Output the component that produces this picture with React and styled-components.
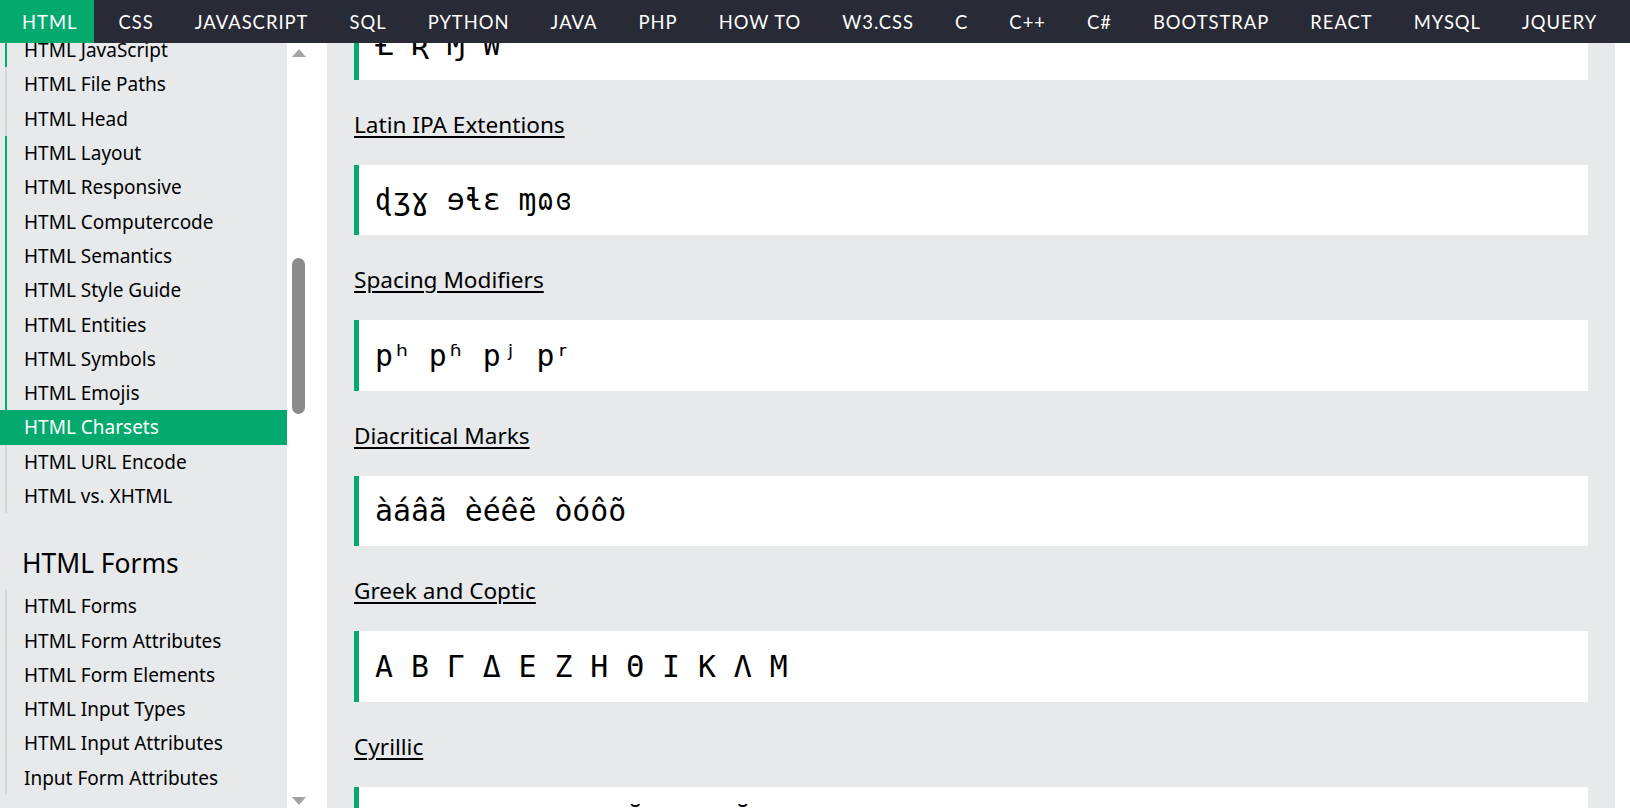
import React from 'react';
import styled, { createGlobalStyle } from 'styled-components';

const GlobalStyle = createGlobalStyle`
  html, body {
    margin: 0;
    padding: 0;
    background: #fff;
    overflow: hidden;
  }
`;

const navLinks = ['HTML', 'CSS', 'JAVASCRIPT', 'SQL', 'PYTHON', 'JAVA', 'PHP', 'HOW TO', 'W3.CSS', 'C', 'C++', 'C#', 'BOOTSTRAP', 'REACT', 'MYSQL', 'JQUERY'];

const htmlTopics = [
  { title: 'HTML JavaScript', line: 'green' },
  { title: 'HTML File Paths', line: 'gray' },
  { title: 'HTML Head', line: 'gray' },
  { title: 'HTML Layout', line: 'green' },
  { title: 'HTML Responsive', line: 'green' },
  { title: 'HTML Computercode', line: 'green' },
  { title: 'HTML Semantics', line: 'green' },
  { title: 'HTML Style Guide', line: 'green' },
  { title: 'HTML Entities', line: 'green' },
  { title: 'HTML Symbols', line: 'green' },
  { title: 'HTML Emojis', line: 'green' },
  { title: 'HTML Charsets', active: true },
  { title: 'HTML URL Encode', line: 'gray' },
  { title: 'HTML vs. XHTML', line: 'gray' },
];

const formTopics = ['HTML Forms', 'HTML Form Attributes', 'HTML Form Elements', 'HTML Input Types', 'HTML Input Attributes', 'Input Form Attributes'];

const charsets = [
  { title: null, sample: 'Ƚ Ʀ Ɱ W' },
  { title: 'Latin IPA Extentions', sample: 'ɖʒɣ ɘɬɛ ɱɷɞ' },
  { title: 'Spacing Modifiers', sample: 'pʰ pʱ pʲ pʳ' },
  { title: 'Diacritical Marks', sample: 'àáâã èéêẽ òóôõ' },
  { title: 'Greek and Coptic', sample: 'Α Β Γ Δ Ε Ζ Η Θ Ι Κ Λ Μ' },
  { title: 'Cyrillic', sample: 'Б В Г Д Ж З И Й К Л Ў Ф' },
];

const lineColors = { green: '#04AA6D', gray: '#d6d6d6' };

const Page = styled.div`
  height: 100vh;
  display: flex;
  flex-direction: column;
  background: #fff;
`;

const TopNav = styled.nav`
  height: 43px;
  flex-shrink: 0;
  background: #282A35;
  display: flex;
  align-items: stretch;
  gap: 2px;
  overflow: hidden;
  position: relative;
  z-index: 2;
`;

const NavLink = styled.a`
  display: flex;
  align-items: center;
  padding: 0 17px 0 22px;
  color: #fff;
  background: ${p => (p.$active ? '#04AA6D' : 'transparent')};
  font-family: "Lato", "Open Sans", sans-serif;
  font-size: 18.4px;
  letter-spacing: 1px;
  white-space: nowrap;
  text-decoration: none;
`;

const Body = styled.div`
  flex: 1;
  display: flex;
  min-height: 0;
`;

const Sidebar = styled.aside`
  width: 287px;
  flex-shrink: 0;
  background: #E7E9EB;
  overflow: hidden;
  font-family: "Noto Sans", "Open Sans", sans-serif;
  color: #000;
`;

const SideList = styled.div`
  margin-top: -10px;
`;

const SideItem = styled.div`
  height: 34.3px;
  display: flex;
  align-items: center;
  font-size: 19px;
  white-space: nowrap;
  margin-left: ${p => (p.$active ? '0' : '5px')};
  padding-left: ${p => (p.$active ? '24px' : '17px')};
  border-left: ${p => (p.$active ? 'none' : `2px solid ${lineColors[p.$line]}`)};
  background: ${p => (p.$active ? '#04AA6D' : 'transparent')};
  color: ${p => (p.$active ? '#fff' : '#000')};
`;

const SideHeading = styled.h2`
  margin: 30px 0 6px 22px;
  font-size: 26.4px;
  font-weight: 400;
  line-height: 40px;
`;

const ScrollTrack = styled.div`
  width: 23px;
  flex-shrink: 0;
  display: flex;
  flex-direction: column;
  align-items: center;
  background: #fff;
  padding: 6px 0 3px;
`;

const Thumb = styled.div`
  width: 13px;
  height: 156px;
  margin-top: 201px;
  border-radius: 7px;
  background: #8b8b8b;
`;

const TrackFill = styled.div`
  flex: 1;
`;

const Main = styled.main`
  flex: 1;
  margin: 0 15px 0 17px;
  padding: 0 27px;
  background: #E7E9EB;
  overflow: hidden;
  font-family: "Noto Sans", "Open Sans", sans-serif;
  color: #000;
`;

const Section = styled.section`
  &:first-child {
    margin-top: -34px;
  }
`;

const SectionTitle = styled.h3`
  margin: 28px 0 23px;
  font-size: 22.6px;
  font-weight: 400;
  line-height: 34px;

  span {
    text-decoration: underline;
    text-underline-offset: 3px;
    text-decoration-thickness: 2px;
  }
`;

const CodeBox = styled.div`
  height: 70.5px;
  display: flex;
  align-items: center;
  background: #fff;
  border-left: 5px solid #04AA6D;
  padding-left: 16px;
  font-family: "DejaVu Sans Mono", "Liberation Mono", monospace;
  font-size: 29.8px;
  white-space: pre;
`;

const Arrow = ({ up }) => (
  <svg width="14" height="8" viewBox="0 0 14 8">
    <polygon points={up ? '7,0 14,8 0,8' : '0,0 14,0 7,8'} fill="#a3a3a3" />
  </svg>
);

const App = () => (
  <Page>
    <GlobalStyle />
    <TopNav>
      {navLinks.map((link, i) => (
        <NavLink key={link} $active={i === 0}>{link}</NavLink>
      ))}
    </TopNav>
    <Body>
      <Sidebar>
        <SideList>
          {htmlTopics.map(t => (
            <SideItem key={t.title} $active={t.active} $line={t.line}>{t.title}</SideItem>
          ))}
        </SideList>
        <SideHeading>HTML Forms</SideHeading>
        {formTopics.map(t => (
          <SideItem key={t} $line="gray">{t}</SideItem>
        ))}
      </Sidebar>
      <ScrollTrack>
        <Arrow up />
        <Thumb />
        <TrackFill />
        <Arrow />
      </ScrollTrack>
      <Main>
        {charsets.map((c, i) => (
          <Section key={i}>
            {c.title && (
              <SectionTitle><span>{c.title}</span></SectionTitle>
            )}
            <CodeBox>{c.sample}</CodeBox>
          </Section>
        ))}
      </Main>
    </Body>
  </Page>
);

export default App;
